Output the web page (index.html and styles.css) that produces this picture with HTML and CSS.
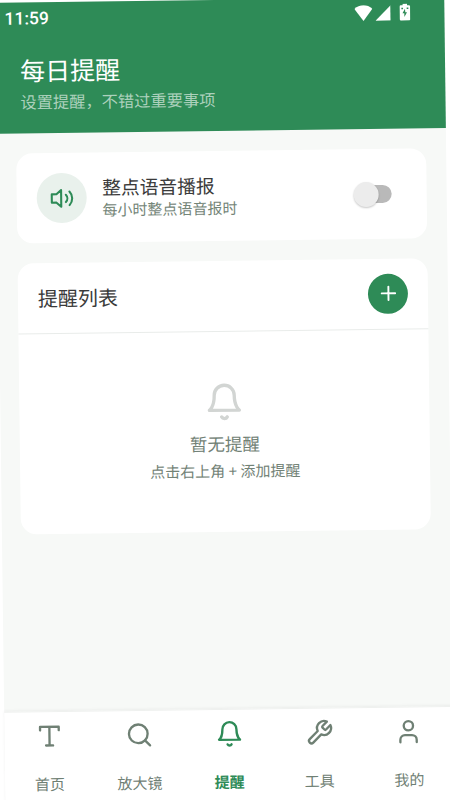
FILE: index.html
```html
<!DOCTYPE html>
<html lang="zh-CN">
<head>
<meta charset="UTF-8">
<meta name="viewport" content="width=device-width, initial-scale=1">
<title>每日提醒</title>
<link rel="stylesheet" href="styles.css">
</head>
<body>
<div class="screen">
  <header class="header">
    <div class="status">
      <span class="clock">11:59</span>
      <div class="status-icons">
        <svg class="wifi" viewBox="0 0 18 16"><path d="M0 3.8Q4 .2 9 .2T18 3.8L9 16Z"/></svg>
        <svg class="signal" viewBox="0 0 16 16"><path d="M16 0V16H0Z"/></svg>
        <svg class="battery" viewBox="0 0 11 17"><path d="M3.3 0H7.7V1.7H9.5Q10.8 1.7 10.8 3V15.7Q10.8 17 9.5 17H1.5Q.2 17 .2 15.7V3Q.2 1.7 1.5 1.7H3.3Z"/><path class="bolt" d="M2 4h1.7v1.5H2zM7.3 4H9v1.5H7.3zM5.6 5.2 3.1 9.6h1.8v3.8l2.7-4.7H5.9z"/></svg>
      </div>
    </div>
    <h1 class="title">每日提醒</h1>
    <p class="subtitle">设置提醒，不错过重要事项</p>
  </header>

  <main class="content">
    <section class="card announce">
      <div class="round-icon">
        <svg class="icon" viewBox="0 0 24 24"><path d="M11 4 6.5 8H2v8h4.500L11 20Z"/><path d="M15.500 8.500a5 5 0 0 1 0 7"/><path d="M19 5.500a9.500 9.500 0 0 1 0 13"/></svg>
      </div>
      <div class="announce-text">
        <h2 class="announce-title">整点语音播报</h2>
        <p class="announce-note">每小时整点语音报时</p>
      </div>
      <div class="switch"><span class="thumb"></span></div>
    </section>

    <section class="card list">
      <div class="list-head">
        <h2 class="list-title">提醒列表</h2>
        <button class="add" aria-label="添加提醒">
          <svg class="icon" viewBox="0 0 24 24"><path d="M5 12h14M12 5v14"/></svg>
        </button>
      </div>
      <div class="empty">
        <svg class="icon empty-bell" viewBox="0 0 24 24"><path d="M6 8a6 6 0 0 1 12 0c0 7 3 9 3 9H3s3-2 3-9"/><path d="M10.3 21a1.94 1.94 0 0 0 3.4 0"/></svg>
        <p class="empty-title">暂无提醒</p>
        <p class="empty-note">点击右上角 + 添加提醒</p>
      </div>
    </section>
  </main>

  <nav class="tabs">
    <a class="tab"><svg class="icon" viewBox="0 0 24 24"><path d="M4 7V4h16v3M9 20h6M12 4v16"/></svg><span>首页</span></a>
    <a class="tab"><svg class="icon" viewBox="0 0 24 24"><circle cx="11" cy="11" r="8"/><path d="m21 21-4.3-4.3"/></svg><span>放大镜</span></a>
    <a class="tab active"><svg class="icon" viewBox="0 0 24 24"><path d="M6 8a6 6 0 0 1 12 0c0 7 3 9 3 9H3s3-2 3-9"/><path d="M10.3 21a1.94 1.94 0 0 0 3.4 0"/></svg><span>提醒</span></a>
    <a class="tab"><svg class="icon" viewBox="0 0 24 24"><path d="M14.7 6.3a1 1 0 0 0 0 1.4l1.6 1.6a1 1 0 0 0 1.4 0l3.77-3.77a6 6 0 0 1-7.94 7.94l-6.91 6.91a2.12 2.12 0 0 1-3-3l6.91-6.91a6 6 0 0 1 7.94-7.94l-3.76 3.76z"/></svg><span>工具</span></a>
    <a class="tab"><svg class="icon" viewBox="0 0 24 24"><path d="M19 21v-2a4 4 0 0 0-4-4H9a4 4 0 0 0-4 4v2"/><circle cx="12" cy="7" r="4"/></svg><span>我的</span></a>
  </nav>
</div>
</body>
</html>
```

FILE: styles.css
```css
* {
  box-sizing: border-box;
  margin: 0;
  padding: 0;
}

html,
body {
  width: 450px;
  height: 800px;
  overflow: hidden;
  background: #fff;
}

body {
  font-family: "Noto Sans CJK SC", sans-serif;
  color: #3a3a3a;
}

h1,
h2 {
  font-weight: 400;
}

/* The whole screen leans slightly to the left. */
.screen {
  display: flex;
  flex-direction: column;
  width: 449.3px;
  height: 812px;
  background: #f7f9f7;
  transform-origin: 0 0;
  transform: translate(-4.75px, 2.75px) rotate(-0.72deg);
}

.icon {
  display: block;
  fill: none;
  stroke: currentColor;
  stroke-width: 2;
  stroke-linecap: round;
  stroke-linejoin: round;
}

.header {
  height: 131px;
  background: #2e8b57;
  color: #fff;
}

.status {
  display: flex;
  justify-content: space-between;
  height: 31px;
  padding: 0 34.6px 0 9px;
}

.clock {
  font: 500 17.5px/32px Roboto, sans-serif;
}

.status-icons {
  display: flex;
  align-items: flex-start;
  padding-top: 7px;
  fill: #fff;
}

.wifi {
  width: 18px;
  height: 16px;
  margin-right: 3px;
}

.signal {
  width: 15.5px;
  height: 16px;
  margin-right: 8.5px;
}

.battery {
  width: 11px;
  height: 17px;
  margin-top: -1px;
}

.bolt {
  fill: #2e8b57;
}

.title {
  margin-top: 16.5px;
  padding-left: 24px;
  font-size: 25px;
  line-height: 38px;
}

.subtitle {
  margin-top: 1.5px;
  padding-left: 24px;
  font-size: 16.25px;
  line-height: 24px;
  color: #acd1bc;
}

.content {
  display: flex;
  flex: 1;
  flex-direction: column;
  gap: 19.5px;
  padding: 20px 20px 0 19px;
}

.card {
  background: #fff;
  border-radius: 16px;
}

.announce {
  display: flex;
  align-items: center;
  height: 90px;
  padding: 0 35px 0 20px;
}

.round-icon {
  display: grid;
  place-items: center;
  width: 50px;
  height: 50px;
  border-radius: 50%;
  background: #e9f1ec;
  color: #2e8b57;
}

.round-icon .icon {
  width: 25px;
  height: 25px;
}

.announce-text {
  flex: 1;
  padding-left: 15.5px;
}

.announce-title {
  font-size: 18.75px;
  line-height: 24px;
}

.announce-note {
  font-size: 15px;
  line-height: 22px;
  color: #748578;
}

.switch {
  display: flex;
  align-items: center;
  width: 34px;
  height: 18px;
  border-radius: 9px;
  background: #b9b9b9;
}

.thumb {
  flex: none;
  width: 25px;
  height: 25px;
  margin-left: -4px;
  border-radius: 50%;
  background: #ececec;
  box-shadow: 0 1px 2px rgba(0, 0, 0, 0.22);
}

.list {
  height: 271.5px;
}

.list-head {
  display: flex;
  align-items: center;
  justify-content: space-between;
  height: 71px;
  padding: 0 20px;
  border-bottom: 1px solid #e9ecea;
}

.list-title {
  font-size: 20px;
  line-height: 30px;
}

.add {
  display: grid;
  place-items: center;
  width: 40px;
  height: 40px;
  border: 0;
  border-radius: 50%;
  background: #2e8b57;
  color: #fff;
}

.add .icon {
  width: 23px;
  height: 23px;
}

.empty {
  display: flex;
  flex-direction: column;
  align-items: center;
  padding-top: 50px;
  color: #728276;
}

.empty-bell {
  width: 40px;
  height: 40px;
  color: #d2d5d3;
}

.empty-title {
  margin-top: 9px;
  font-size: 17.5px;
  line-height: 26px;
}

.empty-note {
  margin-top: 3px;
  font-size: 15px;
  line-height: 22px;
}

.tabs {
  display: flex;
  height: 103px;
  background: #fff;
  border-top: 1px solid #eff1ef;
  box-shadow: 0 -1px 3px rgba(0, 0, 0, 0.05);
}

.tab {
  display: flex;
  flex: 1;
  flex-direction: column;
  align-items: center;
  padding-top: 10px;
  color: #6f8074;
  font-size: 15px;
  line-height: 22px;
}

.tab .icon {
  width: 28px;
  height: 28px;
  margin-bottom: 23px;
}

.tab.active {
  color: #2e8b57;
  font-weight: 700;
}
```
